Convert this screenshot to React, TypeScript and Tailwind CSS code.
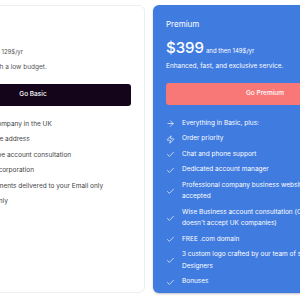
import { ArrowRight, Zap, Check } from "lucide-react"

const basicFeatures = [
  "Register your company in the UK",
  "Registered office address",
  "PayPal and Stripe account consultation",
  "Certificate of incorporation",
  "Company documents delivered to your Email only",
  "Email support only",
]

const premiumFeatures = [
  { icon: "arrow", lines: ["Everything in Basic, plus:"] },
  { icon: "zap", lines: ["Order priority"] },
  { icon: "check", lines: ["Chat and phone support"] },
  { icon: "check", lines: ["Dedicated account manager"] },
  { icon: "check", lines: ["Professional company business website", "accepted"] },
  { icon: "check", lines: ["Wise Business account consultation (Currently", "doesn't accept UK companies)"] },
  { icon: "check", lines: ["FREE .com domain"] },
  { icon: "check", lines: ["3 custom logo crafted by our team of skilled", "Designers"] },
  { icon: "check", lines: ["Bonuses"] },
]

const FeatureIcon = ({ kind, className }: { kind: string; className: string }) => {
  if (kind === "arrow") return <ArrowRight className={className} strokeWidth={1.8} />
  if (kind === "zap") return <Zap className={className} strokeWidth={1.8} />
  return <Check className={className} strokeWidth={1.8} />
}

const App = () => {
  return (
    <div className="w-[300px] h-[300px] overflow-hidden bg-white font-['Inter','Liberation_Sans',sans-serif]">
      <div className="flex gap-2 ml-[-79px] pt-[5px]">
        {/* basic */}
        <div className="w-[224px] shrink-0 h-[288px] rounded-md border border-[#eceef1] bg-white px-[13px] pt-[13px]">
          <h2 className="text-[8px] leading-[12px] text-[#111]">Basic</h2>
          <div className="mt-[9px] flex items-baseline gap-[2px] text-[#111]">
            <span className="text-[15px] leading-[18px] font-medium">$249</span>
            <span className="text-[6px] leading-[10px] text-[#555]">and then 129$/yr</span>
          </div>
          <p className="mt-[4px] text-[6.5px] leading-[10px] text-[#555]">For new business with a low budget.</p>
          <button className="mt-[12px] w-full h-[22px] rounded-[3px] bg-[#14051b] text-white text-[6.5px] font-medium">
            Go Basic
          </button>
          <ul className="mt-[13px] flex flex-col gap-[3.7px]">
            {basicFeatures.map((f) => (
              <li key={f} className="flex items-center gap-[7px]">
                <Check className="w-[9px] h-[9px] shrink-0 text-[#111]" strokeWidth={1.8} />
                <span className="text-[6.5px] leading-[11.7px] text-[#444] whitespace-nowrap">{f}</span>
              </li>
            ))}
          </ul>
        </div>

        {/* premium */}
        <div className="w-[224px] shrink-0 h-[288px] rounded-md bg-[#407be0] shadow-[0_1px_2px_rgba(0,0,0,0.25)] px-[13px] pt-[13px] text-white">
          <h2 className="text-[8px] leading-[12px]">Premium</h2>
          <div className="mt-[9px] flex items-baseline gap-[2px]">
            <span className="text-[15px] leading-[18px] font-medium">$399</span>
            <span className="text-[6px] leading-[10px]">and then 149$/yr</span>
          </div>
          <p className="mt-[4px] text-[6.5px] leading-[10px]">Enhanced, fast, and exclusive service.</p>
          <button className="mt-[12px] w-full h-[22px] rounded-[3px] bg-[#f87878] text-white text-[6.5px] font-medium">
            Go Premium
          </button>
          <ul className="mt-[13px] flex flex-col gap-[3.7px]">
            {premiumFeatures.map((f) => (
              <li key={f.lines[0]} className="flex items-center gap-[7px]">
                <FeatureIcon kind={f.icon} className="w-[9px] h-[9px] shrink-0" />
                <span className="text-[6.5px] leading-[11.7px] whitespace-nowrap">
                  {f.lines.map((l, i) => (
                    <span key={i} className="block">{l}</span>
                  ))}
                </span>
              </li>
            ))}
          </ul>
        </div>
      </div>
    </div>
  )
}

export default App
